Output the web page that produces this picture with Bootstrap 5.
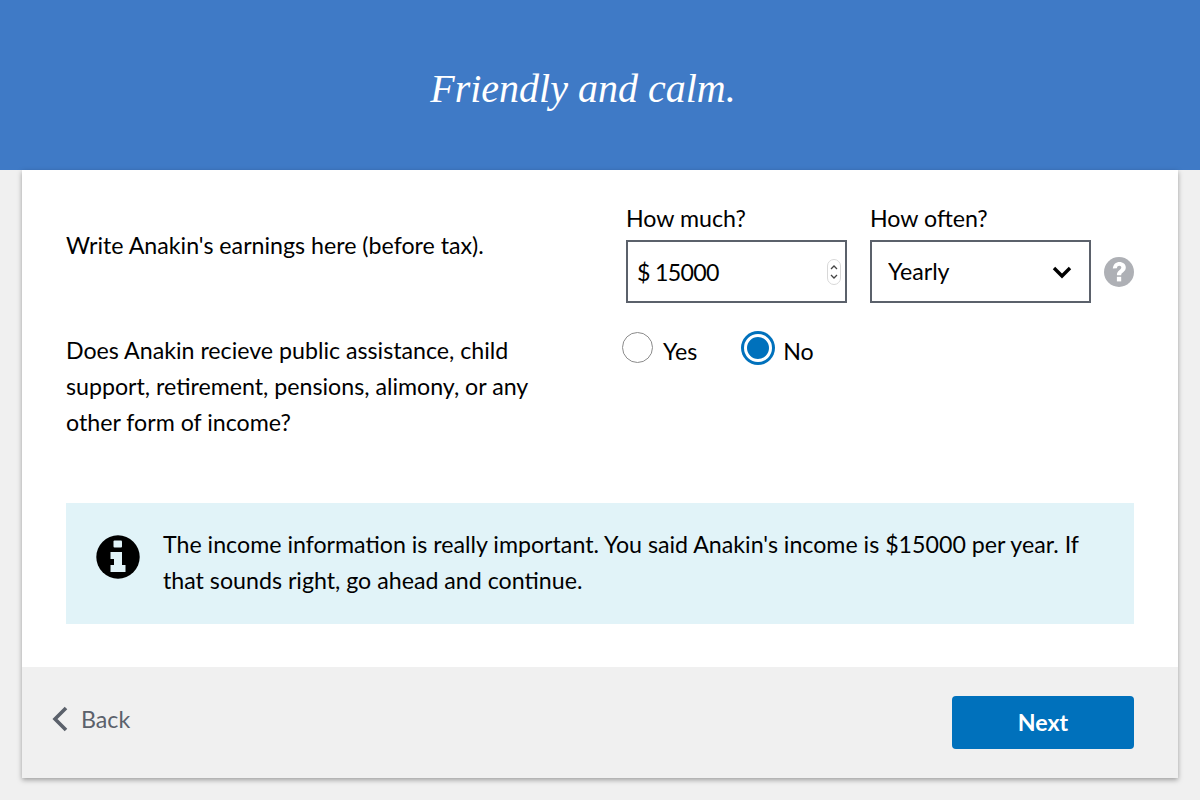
<!DOCTYPE html>
<html lang="en">
<head>
  <meta charset="UTF-8" />
  <meta name="viewport" content="width=device-width, initial-scale=1.0" />
  <title>Friendly and calm</title>
  <link href="https://cdn.jsdelivr.net/npm/bootstrap@5.3.0/dist/css/bootstrap.min.css" rel="stylesheet" />
  <style>
    body { background: #f0f0f0; font-family: "Lato", "Liberation Sans", sans-serif; font-size: 23.2px; line-height: 36px; color: #000; height: 800px; overflow: hidden; }
    .hero { background: #3f7ac6; height: 170px; color: #fff; }
    .hero h1 { font-family: "Liberation Serif", serif; font-style: italic; font-size: 40px; margin: 8px 34px 0 0; }
    .panel { margin: 0 22px; background: #fff; box-shadow: 0 2px 5px rgba(0,0,0,.35); }
    .panel-body { padding: 30px 44px 0; height: 497px; }
    .left-col { width: 560px; flex: none; }
    .left-col p { margin: 0; width: 490px; }
    .earnings-text { padding-top: 27px; }
    .field-label { line-height: 36px; margin: 0 0 4px; display: block; }
    .amount, .freq { border: 2px solid #5b616b; border-radius: 0; height: 63px; font-size: 23.2px; color: #000; padding: 0 9px; box-shadow: none; }
    .amount { letter-spacing: -.7px; }
    .amount-wrap { width: 221px; margin-right: 23px; }
    .freq-wrap { width: 221px; }
    .freq { padding-left: 16px; background-image: url("data:image/svg+xml,%3Csvg xmlns='http://www.w3.org/2000/svg' viewBox='0 0 20 14'%3E%3Cpath d='M2 3l8 8 8-8' fill='none' stroke='%23000' stroke-width='3.4'/%3E%3C/svg%3E"); background-size: 20px 14px; background-position: right 17px center; }
    .spin { position: absolute; right: 6px; top: 19px; }
    .help-icon { margin-top: 57px; }
    .other-row { margin-top: 29px; }
    .radio-row { margin-left: -4px; }
    .radio-row .form-check-input { width: 31px; height: 31px; margin: 0 0 6px; border: 1.5px solid #8b8b8b; box-shadow: none; }
    .radio-row .form-check-input:checked { width: 28px; height: 28px; margin: 0 3px 6px; background: #0071bc; border: 3px solid #fff; box-shadow: 0 0 0 3px #0071bc; }
    .radio-row label { margin-left: 10px; }
    .radio-row .form-check-input:checked + label { margin-left: 8px; }
    .radio-yes { margin-right: 44px; }
    .notice { background: #e1f3f8; margin-top: 63px; padding: 23px 30px; height: 121px; }
    .notice svg { margin: 9px 23px 0 0; }
    .notice p { margin: 0; }
    .panel-foot { background: #f0f0f0; height: 111px; padding: 29px 44px 0 29px; }
    .back-link { color: #5b616b; text-decoration: none; margin-top: 5px; }
    .back-link svg { margin-right: 13px; }
    .next-btn { width: 182px; height: 53px; background: #0071bc; border: 0; border-radius: 4px; font-size: 23.2px; font-weight: 700; color: #fff; }
  </style>
</head>
<body>
  <header class="hero d-flex align-items-center justify-content-center">
    <h1>Friendly and calm.</h1>
  </header>

  <main class="panel">
    <div class="panel-body">
      <!-- Earnings -->
      <div class="d-flex align-items-start">
        <div class="left-col earnings-text"><p>Write Anakin's earnings here (before tax).</p></div>
        <div class="amount-wrap">
          <label class="field-label" for="amount">How much?</label>
          <div class="position-relative">
            <input id="amount" type="text" class="form-control amount" value="$ 15000" />
            <svg class="spin" width="14" height="26" viewBox="0 0 14 26"><rect x=".5" y=".5" width="13" height="25" rx="6.5" fill="#fff" stroke="#d8d8d8"/><path d="M4 10l3-3 3 3M4 16l3 3 3-3" fill="none" stroke="#444" stroke-width="1.3"/></svg>
          </div>
        </div>
        <div class="freq-wrap">
          <label class="field-label" for="freq">How often?</label>
          <select id="freq" class="form-select freq"><option>Yearly</option></select>
        </div>
        <svg class="help-icon ms-auto" width="30" height="30" viewBox="0 0 30 30">
          <circle cx="15" cy="15" r="15" fill="#aeb0b5"/>
          <path d="M8.8 11.4C9.3 7.2 12 5 15.4 5c3.7 0 6.4 2.3 6.4 5.5 0 4.5-4.6 4.7-4.6 7.7h-4.3c0-5 4.4-5 4.4-7.6 0-1.1-.8-1.8-2-1.8-1.3 0-2.1.8-2.4 2.4z" fill="#fff"/>
          <rect x="12.9" y="19.8" width="4.3" height="4.6" fill="#fff"/>
        </svg>
      </div>

      <!-- Other income -->
      <div class="d-flex align-items-start other-row">
        <div class="left-col"><p>Does Anakin recieve public assistance, child support, retirement, pensions, alimony, or any other form of income?</p></div>
        <div class="d-flex radio-row">
          <div class="d-flex align-items-center radio-yes">
            <input class="form-check-input" type="radio" name="other" id="yes" />
            <label for="yes">Yes</label>
          </div>
          <div class="d-flex align-items-center">
            <input class="form-check-input" type="radio" name="other" id="no" checked />
            <label for="no">No</label>
          </div>
        </div>
      </div>

      <!-- Notice -->
      <div class="notice d-flex align-items-start">
        <svg class="flex-shrink-0" width="44" height="44" viewBox="0 0 44 44">
          <circle cx="22" cy="22" r="21.7" fill="#000"/>
          <rect x="17.5" y="5.5" width="8.5" height="7" rx="1" fill="#e1f3f8"/>
          <path d="M14.5 17h11.5v13h3.5v7H14.5v-7h3.5v-6h-3.5z" fill="#e1f3f8"/>
        </svg>
        <p>The income information is really important. You said Anakin's income is $15000 per year. If that sounds right, go ahead and continue.</p>
      </div>
    </div>

    <footer class="panel-foot d-flex justify-content-between align-items-start">
      <a href="#" class="back-link d-flex align-items-center">
        <svg width="17" height="26" viewBox="0 0 17 26"><path d="M15 2L4 13l11 11" fill="none" stroke="#5b616b" stroke-width="3.6"/></svg>
        Back
      </a>
      <button type="button" class="btn next-btn">Next</button>
    </footer>
  </main>

  <script src="https://cdn.jsdelivr.net/npm/bootstrap@5.3.0/dist/js/bootstrap.bundle.min.js"></script>
</body>
</html>
